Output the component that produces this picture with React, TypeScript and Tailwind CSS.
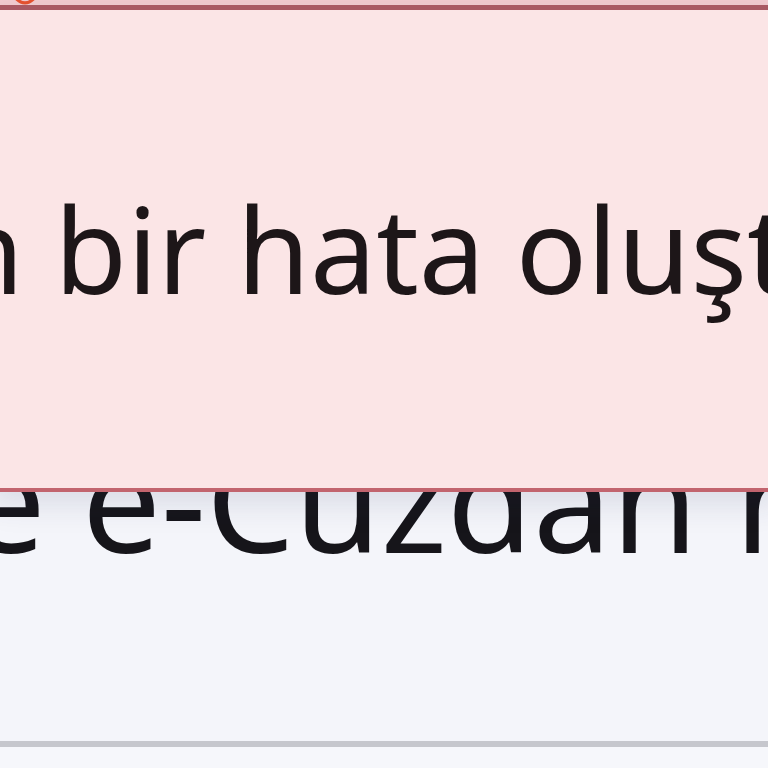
import { AlertCircle } from 'lucide-react';

export default function App() {
  return (
    <div className="h-[768px] w-[768px] overflow-hidden bg-[#f4f5fa] font-['Noto_Sans',sans-serif]">
      {/* header of the alert, scrolled almost out of view */}
      <div className="flex h-[5px] items-end overflow-hidden bg-[#f3cdd0]">
        <AlertCircle className="ml-[12px] h-[26px] w-[26px] shrink-0 text-[#e8532f]" strokeWidth={3} />
      </div>

      {/* error alert */}
      <div className="relative z-10 mx-[-10px] flex h-[487px] items-center border-[4px] border-[#c2646e] border-t-[5px] border-t-[#a95a63] bg-[#fbe5e6] shadow-[0_12px_30px_rgba(30,40,80,0.12)]">
        <p className="ml-[-43px] flex whitespace-nowrap text-[118px] leading-none text-[#1d1618]">
          <span className="flex w-0 justify-end">Bilinmeye</span>
          <span>n bir hata oluştu</span>
        </p>
      </div>

      {/* page heading under the alert */}
      <h1 className="-mt-[63px] flex whitespace-nowrap pl-[82px] text-[140px] leading-none text-[#16151a]">
        <span className="flex w-0 justify-end">{'Destek ile\u00a0'}</span>
        <span>e-Cüzdan hesabı</span>
      </h1>

      <div className="mt-[172px] h-[6px] bg-[#c6c7cd]" />
      <div className="h-full bg-[#f6f7fb]" />
    </div>
  );
}
